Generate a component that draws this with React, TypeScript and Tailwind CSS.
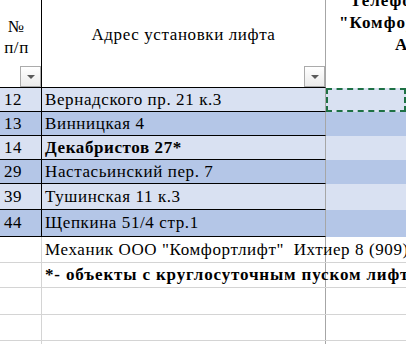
import React from "react";

const ROWS = [
  { n: "12", addr: "Вернадского пр. 21 к.3", h: "h-[24px]", bg: "bg-[#d9e1f2]" },
  { n: "13", addr: "Винницкая 4", h: "h-[24px]", bg: "bg-[#b4c6e7]" },
  { n: "14", addr: "Декабристов 27*", h: "h-[24px]", bg: "bg-[#d9e1f2]", bold: true },
  { n: "29", addr: "Настасьинский пер. 7", h: "h-[24px]", bg: "bg-[#b4c6e7]" },
  { n: "39", addr: "Тушинская 11 к.3", h: "h-[26px]", bg: "bg-[#d9e1f2]" },
  { n: "44", addr: "Щепкина 51/4 стр.1", h: "h-[27px]", bg: "bg-[#b4c6e7]" },
];

const NOTES = [
  { text: 'Механик ООО "Комфортлифт"  Ихтиер 8 (909)', h: "h-[26px]" },
  { text: "*- объекты с круглосуточным пуском лифтов", h: "h-[25px]", bold: true },
  { text: "", h: "h-[27px]" },
  { text: "", h: "h-[26px]" },
];

function FilterButton() {
  return (
    <span className="absolute bottom-0 right-0 flex h-[21px] w-[21px] items-center justify-center border border-[#ababab] bg-linear-to-b from-white to-[#ebebeb]">
      <span className="mt-[1px] h-0 w-0 border-x-[4px] border-t-[4px] border-x-transparent border-t-[#5a5a5a]" />
    </span>
  );
}

export default function App() {
  return (
    <div className="h-[344px] w-[406px] overflow-hidden bg-white font-['Liberation_Serif','Times_New_Roman',serif] text-[17px] tracking-[0.6px] text-black">
      {/* header */}
      <div className="flex h-[88px]">
        <div className="relative flex w-[42px] shrink-0 flex-col items-center border-r border-b border-black pt-[16px] pr-[8px] leading-[21px]">
          <span>№</span>
          <span>п/п</span>
          <FilterButton />
        </div>
        <div className="relative w-[284px] shrink-0 border-r border-r-[#a6a6a6] border-b border-b-black pt-[26px] text-center leading-[18px]">
          Адрес установки лифта
          <FilterButton />
        </div>
        <div className="min-w-0 flex-1 overflow-hidden">
          <div className="mt-[-10px] flex flex-col whitespace-nowrap font-bold leading-[22px] tracking-[1px]">
            <span className="pl-[24px]">Телефон диспетчера</span>
            <span className="pl-[13px]">"Комфортлифт"</span>
            <span className="pl-[69px]">АДС</span>
          </div>
        </div>
      </div>

      {/* table rows */}
      {ROWS.map((row, i) => (
        <div key={row.n} className={`flex ${row.h} leading-[18px]`}>
          <div className={`flex w-[42px] shrink-0 items-center border-r border-b border-black pl-[4px] ${row.bg}`}>
            {row.n}
          </div>
          <div
            className={`flex w-[284px] shrink-0 items-center whitespace-nowrap border-r border-r-[#a6a6a6] border-b border-b-black pl-[3px] ${row.bg} ${row.bold ? "font-bold" : ""}`}
          >
            {row.addr}
          </div>
          <div className={`relative flex-1 ${row.bg}`}>
            {i === 0 && <div className="absolute inset-0 border-2 border-dashed border-[#1e7145]" />}
          </div>
        </div>
      ))}

      {/* rows below the table */}
      {NOTES.map((note, i) => (
        <div key={i} className={`flex ${note.h} border-b border-[#d4d4d4] leading-[18px]`}>
          <div className="w-[42px] shrink-0 border-r border-[#d4d4d4]" />
          <div
            className={`flex w-[284px] shrink-0 items-center whitespace-pre border-r border-[#a6a6a6] pl-[3px] ${note.bold ? "font-bold tracking-[0.85px]" : ""}`}
          >
            {note.text}
          </div>
          <div className="flex-1" />
        </div>
      ))}
      <div className="flex h-[20px]">
        <div className="w-[42px] shrink-0 border-r border-[#d4d4d4]" />
        <div className="w-[284px] shrink-0 border-r border-[#a6a6a6]" />
      </div>
    </div>
  );
}
